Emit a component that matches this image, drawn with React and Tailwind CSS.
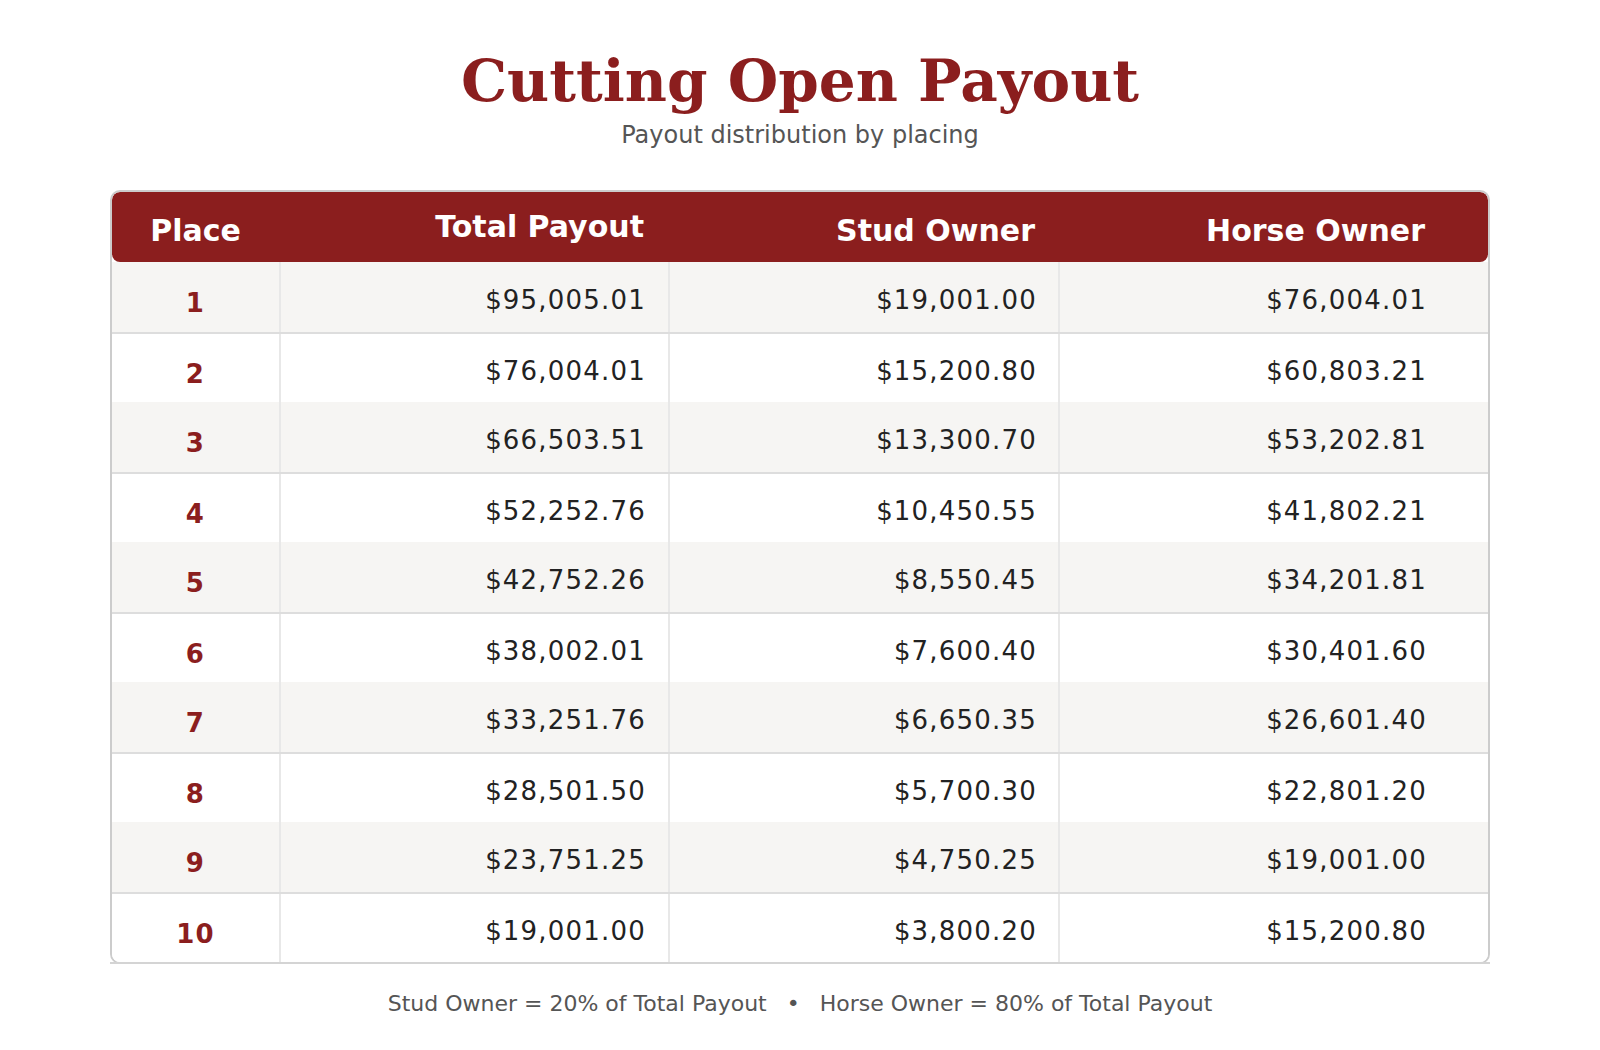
import React from 'react';

const rows = [
  ['1', '$95,005.01', '$19,001.00', '$76,004.01'],
  ['2', '$76,004.01', '$15,200.80', '$60,803.21'],
  ['3', '$66,503.51', '$13,300.70', '$53,202.81'],
  ['4', '$52,252.76', '$10,450.55', '$41,802.21'],
  ['5', '$42,752.26', '$8,550.45', '$34,201.81'],
  ['6', '$38,002.01', '$7,600.40', '$30,401.60'],
  ['7', '$33,251.76', '$6,650.35', '$26,601.40'],
  ['8', '$28,501.50', '$5,700.30', '$22,801.20'],
  ['9', '$23,751.25', '$4,750.25', '$19,001.00'],
  ['10', '$19,001.00', '$3,800.20', '$15,200.80'],
];

const sans = "font-['DejaVu_Sans','Liberation_Sans',sans-serif]";

const App = () => {
  return (
    <div className={`min-h-[1050px] w-full bg-white px-[110px] pt-[52px] ${sans}`}>
      <h1 className="text-center font-['DejaVu_Serif','Liberation_Serif',serif] text-[58px] font-bold leading-none text-[#8b1e1e]">
        Cutting Open Payout
      </h1>
      <p className="mt-[13px] text-center text-[24px] leading-none text-[#555]">
        Payout distribution by placing
      </p>

      <div className="mt-[43px]">
        <div className="overflow-hidden rounded-[10px] border-2 border-[#cccccc]">
          <div className="grid h-[70px] grid-cols-[169px_389px_390px_1fr] rounded-[8px] bg-[#8b1e1e] text-[30px] font-bold leading-none text-white">
            <div className="flex items-center justify-center pr-[2px] pt-2">Place</div>
            <div className="flex items-center justify-end pr-[26px]">Total Payout</div>
            <div className="flex items-center justify-end pr-[25px] pt-2">Stud Owner</div>
            <div className="flex items-center justify-end pr-[63px] pt-2">Horse Owner</div>
          </div>

          {rows.map((r, i) => (
            <div
              key={r[0]}
              className={
                i % 2 === 0
                  ? 'grid h-[72px] grid-cols-[169px_389px_390px_1fr] border-b-2 border-[#dddddd] bg-[#f6f5f3] text-[26px] leading-none tracking-[1.2px]'
                  : 'grid h-[68px] grid-cols-[169px_389px_390px_1fr] bg-white text-[26px] leading-none tracking-[1.2px]'
              }
            >
              <div className="flex items-center justify-center border-r-2 border-[#e8e8e8] pt-[11px] font-bold text-[#8b1e1e]">
                {r[0]}
              </div>
              <div className="flex items-center justify-end border-r-2 border-[#e8e8e8] pr-[22px] pt-[5px] text-[#222]">
                {r[1]}
              </div>
              <div className="flex items-center justify-end border-r-2 border-[#e8e8e8] pr-[21px] pt-[5px] text-[#222]">
                {r[2]}
              </div>
              <div className="flex items-center justify-end pr-[61px] pt-[5px] text-[#222]">
                {r[3]}
              </div>
            </div>
          ))}
        </div>
        <div className="-mt-[2px] h-[2px] bg-[#d4d4d4]"></div>
      </div>

      <p className="mt-[29px] text-center text-[22px] leading-none text-[#555]">
        Stud Owner = 20% of Total Payout
        <span className="mx-5">•</span>
        Horse Owner = 80% of Total Payout
      </p>
    </div>
  );
};

export default App;
